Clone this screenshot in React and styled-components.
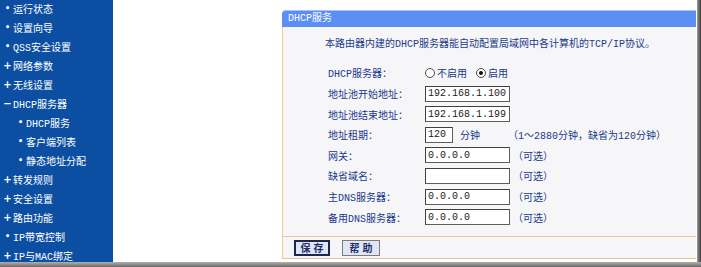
import React from 'react';
import styled, { createGlobalStyle } from 'styled-components';

const Global = createGlobalStyle`
  html, body { margin: 0; padding: 0; background: #ffffff; }
  body {
    font-family: "Liberation Mono", "Noto Sans CJK SC", monospace;
    font-size: 10px;
  }
`;

const Screen = styled.div`
  width: 701px;
  height: 267px;
  display: flex;
  flex-direction: column;
  overflow: hidden;
  background: #ffffff;
`;

const Main = styled.div`
  display: flex;
  height: 262px;
`;

const Sidebar = styled.nav`
  width: 113px;
  flex: none;
  background: #0c4fa2;
  overflow: hidden;
`;

const NavList = styled.ul`
  list-style: none;
  margin: -1.5px 0 0 0;
  padding: 0;
`;

const NavItem = styled.li`
  display: flex;
  align-items: center;
  height: 19.05px;
  padding-left: ${(p) => (p.$sub ? 16 : 3)}px;
  color: #ffffff;
  font-size: 10px;
  white-space: nowrap;
`;

const Mark = styled.span`
  width: 9px;
  flex: none;
  text-align: center;
  font-family: "DejaVu Sans", sans-serif;
  font-size: ${(p) => (p.$kind === 'dot' ? 8 : 10)}px;
  font-weight: bold;
  margin-right: ${(p) => (p.$kind === 'dot' ? 1 : 1)}px;
`;

const Content = styled.main`
  flex: 1;
  background: #ffffff;
  border-top-left-radius: 8px;
  padding: 10px 0 0 169px;
`;

const Shadow = styled.div`
  width: 4px;
  flex: none;
  background: linear-gradient(to right, #9a9a9a, #3c3c3c);
`;

const BottomBar = styled.div`
  height: 5px;
  background: linear-gradient(to bottom, #b0b0b0, #6a6a6a);
`;

const Panel = styled.section`
  width: 414px;
`;

const PanelHeader = styled.header`
  height: 17px;
  box-sizing: border-box;
  background: #5c8ff4;
  border-top: 1px solid #a9c3fa;
  border-top-left-radius: 4px;
  color: #ffffff;
  font-size: 10px;
  line-height: 15px;
  padding-left: 6px;
`;

const PanelBody = styled.div`
  background: #f6f6f9;
  border-left: 1px solid #f3cba0;
`;

const Description = styled.p`
  margin: 0;
  padding: 11px 0 0 42px;
  line-height: 14px;
  color: #1d3a88;
  white-space: nowrap;
`;

const Form = styled.div`
  display: grid;
  grid-template-columns: 97px 1fr;
  grid-auto-rows: 20.6px;
  align-items: center;
  margin-top: 10.7px;
  padding-left: 45px;
`;

const Label = styled.span`
  color: #21388c;
  white-space: nowrap;
`;

const Field = styled.div`
  display: flex;
  align-items: center;
  color: #21388c;
  white-space: nowrap;
`;

const TextInput = styled.input`
  box-sizing: border-box;
  width: ${(p) => p.$w || 85}px;
  height: 16px;
  margin: 0;
  padding: 0 2px;
  border: 1px solid #5e5e5e;
  border-top-color: #404040;
  border-left-color: #404040;
  background: #ffffff;
  color: #1c1c1c;
  font-family: "Liberation Mono", monospace;
  font-size: 10px;
  outline: none;
`;

const Note = styled.span`
  margin-left: ${(p) => p.$gap || 4}px;
  color: #21388c;
`;

const RadioWrap = styled.label`
  display: flex;
  align-items: center;
  margin-right: ${(p) => p.$mr || 0}px;
  color: #21388c;
`;

const RadioCircle = styled.span`
  box-sizing: border-box;
  width: 10px;
  height: 10px;
  margin-right: 2px;
  border-radius: 50%;
  border: 1px solid #4a4a4a;
  background: #ffffff;
  display: flex;
  align-items: center;
  justify-content: center;
  &::after {
    content: '';
    display: ${(p) => (p.$on ? 'block' : 'none')};
    width: 4px;
    height: 4px;
    border-radius: 50%;
    background: #111;
  }
`;

const Footer = styled.div`
  margin-top: 8.7px;
  height: 23px;
  box-sizing: border-box;
  border-top: 1px solid #f0c08e;
  border-bottom: 1px solid #f0c08e;
  display: flex;
  align-items: center;
  gap: 12px;
  padding-left: 11px;
`;

const Button = styled.button`
  box-sizing: border-box;
  height: 16px;
  width: ${(p) => p.$w}px;
  padding: 0;
  background: #dfe6f5;
  border: ${(p) => (p.$focus ? '2px solid #1c2850' : '1px solid #7a7a7a')};
  color: #1d2f6e;
  font-family: "Noto Sans CJK SC", sans-serif;
  font-size: 10px;
  font-weight: bold;
  letter-spacing: 3px;
  text-indent: 3px;
  line-height: 12px;
`;

const navItems = [
  { t: '运行状态', k: 'dot' },
  { t: '设置向导', k: 'dot' },
  { t: 'QSS安全设置', k: 'dot' },
  { t: '网络参数', k: 'plus' },
  { t: '无线设置', k: 'plus' },
  { t: 'DHCP服务器', k: 'minus' },
  { t: 'DHCP服务', k: 'dot', sub: true },
  { t: '客户端列表', k: 'dot', sub: true },
  { t: '静态地址分配', k: 'dot', sub: true },
  { t: '转发规则', k: 'plus' },
  { t: '安全设置', k: 'plus' },
  { t: '路由功能', k: 'plus' },
  { t: 'IP带宽控制', k: 'dot' },
  { t: 'IP与MAC绑定', k: 'plus' },
];

const glyph = { dot: '•', plus: '+', minus: '−' };

const optional = [
  { label: '网关：', value: '0.0.0.0' },
  { label: '缺省域名：', value: '' },
  { label: '主DNS服务器：', value: '0.0.0.0' },
  { label: '备用DNS服务器：', value: '0.0.0.0' },
];

export default function App() {
  return (
    <>
      <Global />
      <Screen>
        <Main>
          <Sidebar>
            <NavList>
              {navItems.map((n) => (
                <NavItem key={n.t} $sub={n.sub}>
                  <Mark $kind={n.k}>{glyph[n.k]}</Mark>
                  {n.t}
                </NavItem>
              ))}
            </NavList>
          </Sidebar>
          <Content>
            <Panel>
              <PanelHeader>DHCP服务</PanelHeader>
              <PanelBody>
                <Description>
                  本路由器内建的DHCP服务器能自动配置局域网中各计算机的TCP/IP协议。
                </Description>
                <Form>
                  <Label>DHCP服务器：</Label>
                  <Field>
                    <RadioWrap $mr={9}>
                      <RadioCircle />
                      不启用
                    </RadioWrap>
                    <RadioWrap>
                      <RadioCircle $on />
                      启用
                    </RadioWrap>
                  </Field>

                  <Label>地址池开始地址：</Label>
                  <Field>
                    <TextInput readOnly value="192.168.1.100" />
                  </Field>

                  <Label>地址池结束地址：</Label>
                  <Field>
                    <TextInput readOnly value="192.168.1.199" />
                  </Field>

                  <Label>地址租期：</Label>
                  <Field>
                    <TextInput readOnly $w={28} value="120" />
                    <Note $gap={7}>分钟</Note>
                    <Note $gap={28}>（1～2880分钟，缺省为120分钟）</Note>
                  </Field>

                  {optional.map((o) => (
                    <React.Fragment key={o.label}>
                      <Label>{o.label}</Label>
                      <Field>
                        <TextInput readOnly value={o.value} />
                        <Note $gap={3}>（可选）</Note>
                      </Field>
                    </React.Fragment>
                  ))}
                </Form>
                <Footer>
                  <Button $w={36} $focus>保存</Button>
                  <Button $w={38}>帮助</Button>
                </Footer>
              </PanelBody>
            </Panel>
          </Content>
          <Shadow />
        </Main>
        <BottomBar />
      </Screen>
    </>
  );
}
